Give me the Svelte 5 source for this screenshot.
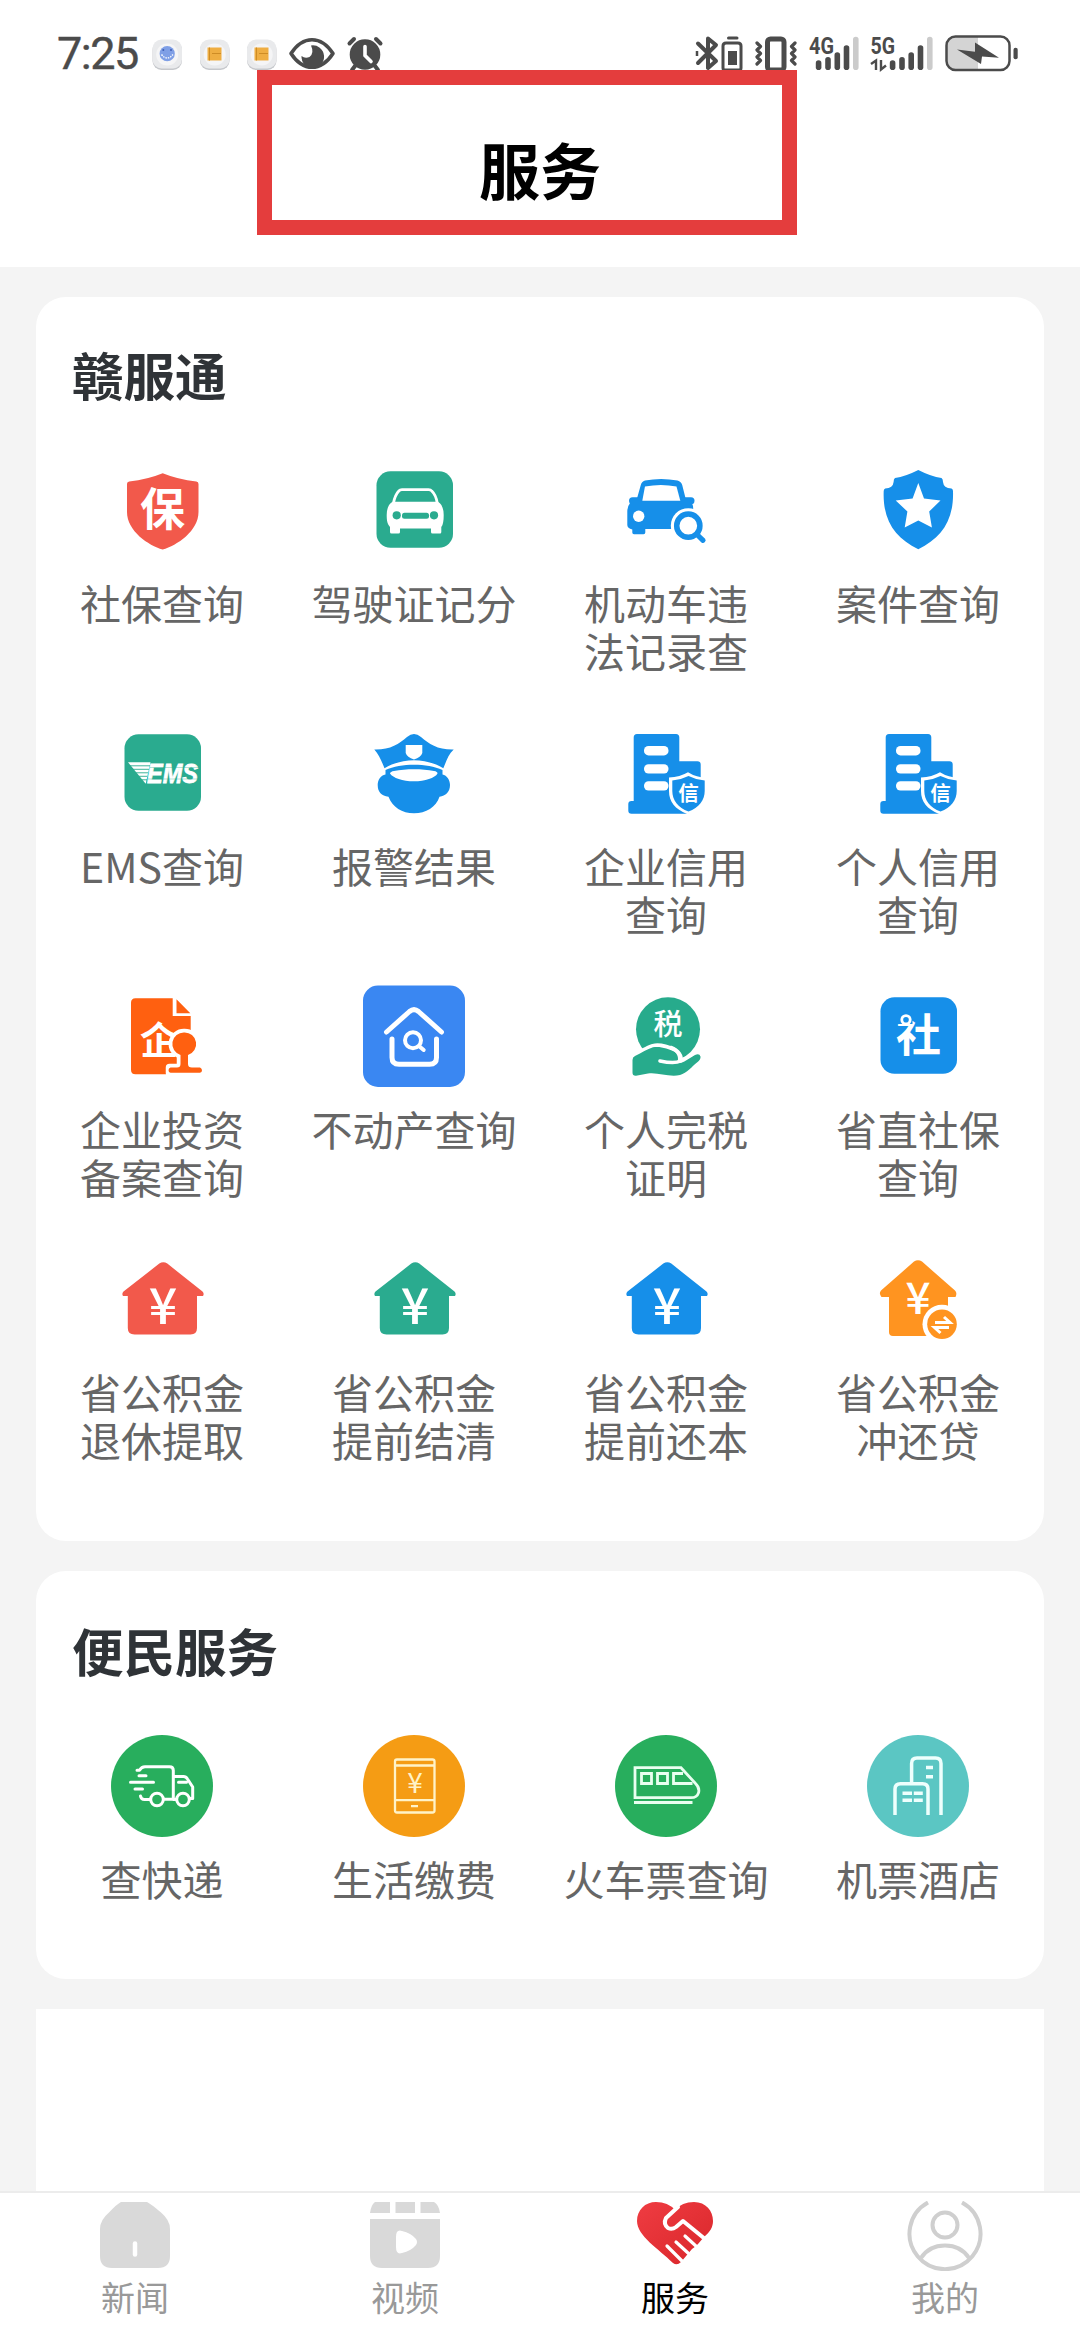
<script>
  const government = [
    { icon: 'insurance', lines: ['社保查询'] },
    { icon: 'license', lines: ['驾驶证记分'] },
    { icon: 'violation', lines: ['机动车违', '法记录查'] },
    { icon: 'case', lines: ['案件查询'] },
    { icon: 'ems', lines: ['EMS查询'] },
    { icon: 'police', lines: ['报警结果'] },
    { icon: 'credit', lines: ['企业信用', '查询'] },
    { icon: 'credit', lines: ['个人信用', '查询'] },
    { icon: 'invest', lines: ['企业投资', '备案查询'] },
    { icon: 'estate', lines: ['不动产查询'] },
    { icon: 'tax', lines: ['个人完税', '证明'] },
    { icon: 'social', lines: ['省直社保', '查询'] },
    { icon: 'fund', color: '#f2594b', lines: ['省公积金', '退休提取'] },
    { icon: 'fund', color: '#2aab8f', lines: ['省公积金', '提前结清'] },
    { icon: 'fund', color: '#168fe9', lines: ['省公积金', '提前还本'] },
    { icon: 'repay', lines: ['省公积金', '冲还贷'] }
  ];

  const daily = [
    { icon: 'express', lines: ['查快递'] },
    { icon: 'payment', lines: ['生活缴费'] },
    { icon: 'train', lines: ['火车票查询'] },
    { icon: 'hotel', lines: ['机票酒店'] }
  ];

  const tabs = [
    { id: 'news', label: '新闻' },
    { id: 'video', label: '视频' },
    { id: 'service', label: '服务', active: true },
    { id: 'mine', label: '我的' }
  ];

  const signal4g = [[818.6, 63], [828, 59.7], [837.3, 55], [846.5, 48]];
  const signal5g = [[892.6, 63], [902, 59.7], [911.2, 55], [920.5, 48]];
</script>

{#snippet serviceIcon(item)}
  <svg class="icon" viewBox="0 0 102 102">
    {#if item.icon === 'insurance'}
      <path fill="#f2594b" d="M51.7 14.3Q67 20.5 85.3 22.6Q87.5 23 87.5 25V53C87.5 72 66 86.500 51.7 90.500C37.500 86.500 16 72 16 53V25Q16 23 18.200 22.600Q36.500 20.500 51.700 14.300Z" />
      <text class="glyph" x="51.5" y="67" font-size="45">保</text>
    {:else if item.icon === 'license'}
      <rect x="13.500" y="12.300" width="76.500" height="76.500" rx="14" fill="#2aab8f" />
      <path fill="none" stroke="#fff" stroke-width="2.800" d="M30.500 44Q32 36 35.800 32Q37 30.600 39 30.600H65.500Q67.700 30.600 68.800 32Q73 36 74.200 44" />
      <path fill="#fff" d="M29.500 42.700H75C79 45 80.700 50 80.700 56C80.700 62 80 66 78.300 68V73Q78.300 74.500 77 74.500H69.500Q68 74.500 68 73V69.500H37V73Q37 74.500 35.500 74.500H28.500Q27 74.500 27 73V68C24.500 65 23.700 62 23.700 56C23.700 50 25.500 45 29.500 42.700Z" />
      <circle cx="33.700" cy="56.300" r="4.100" fill="#2aab8f" />
      <circle cx="71" cy="56.300" r="4.100" fill="#2aab8f" />
      <rect x="39" y="53.800" width="27" height="6" rx="2.500" fill="#2aab8f" />
    {:else if item.icon === 'violation'}
      <g fill="#168fe9">
        <path d="M21 43L25.800 26Q26.500 22.500 30 21.500Q46 18.500 62.500 21.500Q66.300 22.500 67.200 26L71.500 43Z" />
        <rect x="14" y="38.300" width="18" height="7" rx="3.500" />
        <rect x="61" y="38.300" width="18.500" height="7" rx="3.500" />
        <path d="M16 42.500H75Q79 45 78 52V70H30.300V73.500Q30.300 75.300 28.500 75.300H19Q17.300 75.300 17.300 73.500V70.500Q12.300 69 12.300 66V52Q12.500 47 16 42.500Z" />
      </g>
      <path fill="#fff" d="M27.300 41.700L30 27.500Q46 24.500 61.500 27.500L65.300 41.700Z" />
      <circle cx="23.700" cy="57.300" r="5.700" fill="#fff" />
      <circle cx="73.300" cy="66.700" r="17.500" fill="#fff" />
      <circle cx="73.300" cy="66.700" r="11.600" fill="#fff" stroke="#168fe9" stroke-width="5.500" />
      <path d="M82 75.500L88 81.300" stroke="#168fe9" stroke-width="5.200" stroke-linecap="round" />
    {:else if item.icon === 'case'}
      <path fill="#168fe9" d="M51.300 11Q64 17.500 74.500 19Q76 20 76 23Q76.500 29 84.500 29.500Q86 30 86 32C87 62 74 79 51.300 90.300C28.500 79 15.500 62 16.700 32Q16.700 30 18.200 29.500Q26 29 26.600 23Q26.600 20 28 19Q38.500 17.500 51.300 11Z" />
      <path fill="#fff" d="M51.300 24L57 39.600L73.500 41.500L62.200 52.500L64.900 68.600L51.300 61.500L37.700 68.600L40.400 52.500L28.700 41.500L45.600 39.600Z" />
    {:else if item.icon === 'ems'}
      <rect x="13.500" y="12.300" width="76.500" height="76.500" rx="14" fill="#2aab8f" />
      <path fill="#fff" d="M17 40.300H39.500L34.700 61.700Z" />
      <text class="latin" x="36" y="61" font-size="28" textLength="51" lengthAdjust="spacingAndGlyphs">EMS</text>
      <path stroke="#2aab8f" stroke-width="0.900" d="M18 43.800H39M21 47.300H38M25 50.800H37M28 54.300H36M31 57.800H36" />
      <path stroke="#2aab8f" stroke-width="0.500" opacity=".7" d="M39 45.500H88M37 57H88" />
    {:else if item.icon === 'police'}
      <path fill="#168fe9" d="M11.300 27.600C27 28 36 22 44 15Q51 9 58 15C66 22 75 28 90.700 27.600C85 33 83.500 39 80.300 46.300C63 35.500 39 35.500 21.500 46.300C18.500 39 16 33 11.300 27.600Z" />
      <path fill="#168fe9" d="M22.500 48C38 41 64 41 79.500 48V52.500C84 53.500 87 58 87 63C87 70 82.500 74 76.500 74.700C73 85 63 91.300 51 91.300C39 91.300 29.500 85 25.500 74.700C18.500 74 14.700 70 14.700 63C14.700 58 17.500 53.500 22.500 52.500Z" />
      <path fill="#fff" d="M27 51.500Q27.500 49.500 31 49C43 46.800 59 46.800 71 49Q74.500 49.500 74.500 51.500C72 56 62 59.300 51 59.300C39.500 59.300 30 56 27 51.500ZM42.700 23H59.300V31Q58 35 51 37.500Q44 35 42.700 31Z" />
    {:else if item.icon === 'credit'}
      <path fill="#168fe9" d="M22 12H61Q64.300 12 64.300 15.500V39.300H82.500Q85.700 39.300 85.700 42.500V91.700H16.500Q13.300 91.700 13.300 88.500V82Q13.300 79 16.500 79H18.700V15.500Q18.700 12 22 12Z" />
      <g fill="#fff">
        <rect x="29" y="24" width="24.500" height="9.400" rx="4.500" />
        <rect x="29" y="42.200" width="24.500" height="9.400" rx="4.500" />
        <rect x="29" y="59.200" width="24.500" height="9.400" rx="4.500" />
        <path d="M73 50.300Q81 55.500 93 56V92H72C60 87 54 80 54 69V55.500Q65 55 73 50.300Z" />
      </g>
      <path fill="#168fe9" d="M73.500 54Q81.500 58 89.700 58.500V69C89.700 78 84 86 73.500 89.500C63 86 57.300 78 57.300 69V58.500Q65.500 58 73.500 54Z" />
      <text class="glyph" x="73.500" y="79" font-size="20.500">信</text>
    {:else if item.icon === 'invest'}
      <path fill="#ff6010" d="M24.500 13.300H61.700V31H79.700V89.300H24.500Q20 89.300 20 84.800V17.800Q20 13.300 24.500 13.300ZM65.500 14.300L79.300 28.300H65.500Z" />
      <text class="glyph" x="48" y="68.500" font-size="38">企</text>
      <path fill="#fff" stroke="#fff" stroke-width="7.500" stroke-linejoin="round" d="M73.300 47.500A11.500 11.500 0 0 1 77 70V79Q77 82.500 81 82.500H89.500V88H58.500V82.500H66Q69.500 82.500 69.500 79V70A11.500 11.500 0 0 1 73.300 47.500Z" />
      <path fill="#ff6010" d="M73.300 47.500A11.500 11.500 0 0 1 77 70V79Q77 82.500 81 82.500H89Q91 83.500 91 85.200Q91 87.500 89 87.700H59.500Q57.500 87.500 57.500 85.200Q57.500 83 59.500 82.500H66Q69.500 82.500 69.500 79V70A11.500 11.500 0 0 1 73.300 47.500Z" />
    {:else if item.icon === 'estate'}
      <rect x="0" y="0.500" width="102" height="101.500" rx="15" fill="#3a87f2" />
      <g fill="none" stroke="#fff" stroke-width="5" stroke-linecap="round" stroke-linejoin="round">
        <path d="M23.500 47L46.500 26.500Q51 22.700 55.500 26.500L78.500 47" />
        <path d="M29 54V72.500Q29 79.300 36 79.300H66.500Q73.500 79.300 73.500 72.500V54" />
        <circle cx="50" cy="55.300" r="8" stroke-width="4" />
        <path d="M56.500 61.500L60.700 65" stroke-width="4" />
      </g>
    {:else if item.icon === 'tax'}
      <circle cx="53" cy="44.300" r="32" fill="#27ab8c" />
      <text class="glyph medium" x="53" y="49.500" font-size="29">税</text>
      <path fill="#27ab8c" stroke="#fff" stroke-width="7" paint-order="stroke" d="M17.500 75Q17.500 72 20 71C27 68 32 64 38 62.300C45 60.800 54 64 59 66.500C63 69 64 74 62 77.500C65 78.500 68 77.500 71 75.500L80 70Q84.500 68 85.500 71.500Q86 74.500 82 77.500C77 81.500 72 88 65 90C54 92.500 43 87 33 88.500L21 90.800Q17.500 91 17.500 87.500Z" />
      <path fill="none" stroke="#fff" stroke-width="3.600" stroke-linecap="round" d="M45 76C52 77.500 60 79 65.500 76C67.500 71 63 65 56 62.500" />
    {:else if item.icon === 'social'}
      <rect x="13.500" y="12.300" width="76.500" height="76.500" rx="14" fill="#168fe9" />
      <text class="glyph" x="51.500" y="66.500" font-size="45">社</text>
      <rect x="30" y="24" width="15.500" height="15" fill="#168fe9" />
      <circle cx="39" cy="34.800" r="4.200" fill="#168fe9" stroke="#fff" stroke-width="2.800" />
    {:else if item.icon === 'fund'}
      <path fill={item.color} d="M48.300 15.600Q52.300 12.800 56.300 15.600L91.500 43.500Q93.500 45.500 92 48H86V80Q86 86.500 79.500 86.500H23.500Q16.800 86.500 16.800 80V48H12Q10.500 45.500 12.500 43.500Z" />
      <text class="yen" x="52" y="76" font-size="50">¥</text>
    {:else if item.icon === 'repay'}
      <path fill="#ff9420" d="M47 13.600Q51 10.800 55 13.600L88 42.500Q90.500 45 88.500 49H81V88H26Q22 88 22 84V49H14.500Q11.500 45.500 14 42.500Z" />
      <text class="yen" x="51" y="65.500" font-size="44">¥</text>
      <circle cx="75" cy="76.300" r="19.500" fill="#fff" />
      <circle cx="75" cy="76.300" r="14.800" fill="#ff9420" />
      <path fill="none" stroke="#fff" stroke-width="3" d="M68 74.500H83L77 69M82 79.500H67.500L73.500 85" />
    {:else if item.icon === 'express'}
      <circle cx="51" cy="51" r="51" fill="#28ae5d" />
      <g fill="none" stroke="#fff" stroke-width="3" stroke-linecap="round" stroke-linejoin="round">
        <path d="M26 35.300H28.500Q30.500 31.700 34 31.700H58.500Q62.300 31.700 62.300 35.500V64.300H53M62.300 41.500H72.500Q75 41.500 76.500 44L81.700 52V63.500H79.500M67.500 47.300H75.500M29.500 61Q30 64.500 33.500 64.500H39.500M62.300 64.500H65" />
        <path d="M28 40.700H35M19.500 47.200H42.500M24 54H31.500" />
        <circle cx="46" cy="64.500" r="6.300" />
        <circle cx="72" cy="64.500" r="6.300" />
      </g>
    {:else if item.icon === 'payment'}
      <circle cx="51" cy="51" r="51" fill="#f59c14" />
      <g fill="none" stroke="#fff3c8" stroke-width="2.300">
        <rect x="32" y="24.500" width="39.500" height="53" rx="2" />
        <path d="M32 30.500H71.500M32 65.200H71.500M48 71.200H55" />
      </g>
      <text class="yen thin" x="52" y="57.500" font-size="28">¥</text>
    {:else if item.icon === 'train'}
      <circle cx="51" cy="51" r="51" fill="#28ae5d" />
      <g fill="none" stroke="#e9fff0" stroke-width="2.800">
        <path d="M20 32.700H66L80.500 48.500C86.500 54.500 84 62.700 76 62.700H20ZM19 67.500H77.500" />
        <path d="M26.500 38.500H36.500V48.500H26.500ZM42.500 38.500H52.500V48.500H42.500ZM77.500 48.500H58.500V38.500H68" />
      </g>
    {:else}
      <circle cx="51" cy="51" r="51" fill="#5bc6c3" />
      <g fill="none" stroke="#eefffd" stroke-width="3.500">
        <path d="M44.600 48.500V28.500Q44.600 23 50 23H68.500Q74 23 74 28.500V80M28 80V54Q28 48.700 33.500 48.700H55.500Q61 48.700 61 54V80" />
        <path d="M59 32.500H66M59 41.700H66M35.500 58.300H45M46.800 58.300H55.800M35.500 65.200H45M46.800 65.200H55.800" />
      </g>
    {/if}
  </svg>
{/snippet}

{#snippet services(items)}
  <div class="grid">
    {#each items as item}
      <div class="service">
        {@render serviceIcon(item)}
        <div class="label">
          {#each item.lines as line}<span>{line}</span>{/each}
        </div>
      </div>
    {/each}
  </div>
{/snippet}

<div class="app">
  <header>
    <div class="status">
      <span class="time">7:25</span>
      <svg class="left-tray" width="240" height="42" viewBox="150 32 240 42">
        {#each [152.500, 200, 247] as x, i}
          <rect {x} y="41" width="29.500" height="29" rx="9" fill="#c6c8cc" />
          <rect {x} y="39.500" width="29.500" height="29" rx="9" fill="#e9eaec" />
          <circle cx={x + 14.700} cy="54.500" r="11" fill="#f5f5f6" />
          {#if i === 0}
            <circle cx={x + 14.700} cy="53.700" r="7.600" fill="#7f9fe6" />
            <path d="M161.500 54.500Q167.200 61.500 173 54.500" fill="none" stroke="#fff" stroke-width="1.300" stroke-dasharray="1.500 1" />
            <circle cx="163.300" cy="50" r="1" fill="#405fb5" /><circle cx="171" cy="50" r="1" fill="#405fb5" />
          {:else}
            <rect x={x + 7.500} y="47.500" width="14" height="13" fill="#efae42" />
            <path d="M{x + 9.500} 47.500V60.500M{x + 12} 53.500H{x + 21}" stroke="#c98822" stroke-width="0.900" />
          {/if}
        {/each}
        <path d="M291 53.500Q300 39.700 312 39.700T333 53.500Q324 67.300 312 67.300T291 53.500Z" fill="none" stroke="#4b4b4b" stroke-width="3.600" stroke-linejoin="round" />
        <path d="M311 45.500A11.300 11.300 0 1 1 301.500 56Q305 59 309.500 57Q314.500 53 311 45.500Z" fill="#4b4b4b" />
        <circle cx="365" cy="54.500" r="15.300" fill="#4b4b4b" />
        <path d="M349.500 43.500L354 39M380.500 43.500L376 39M355 66L352 70M375 66L378 70" stroke="#4b4b4b" stroke-width="4" stroke-linecap="round" />
        <path d="M365 46.500V55.500L371 61.500" fill="none" stroke="#fff" stroke-width="3.600" stroke-linecap="round" />
      </svg>
      <svg class="right-tray" width="332" height="42" viewBox="690 32 332 42">
        <g fill="none" stroke="#4b4b4b" stroke-linejoin="round" stroke-linecap="round">
          <path stroke-width="4" d="M698 43.500L716 61L708 68V38.500L716 45L698 63" />
          <path stroke-width="3" d="M728.500 38H737M726 43H738Q741 43 741 46V68Q741 70 739 70H725Q723 70 723 68V46Q723 43 726 43Z" />
          <rect x="767.500" y="39" width="16.500" height="31" rx="3" stroke-width="5" />
          <path stroke-width="3.200" d="M757 43L760.500 46.500L757 50L760.500 53.500L757 57L760.500 60.500L757 64M795 43L791.500 46.500L795 50L791.500 53.500L795 57L791.500 60.500L795 64" />
        </g>
        <path stroke="#4b4b4b" stroke-width="2.500" d="M697 51V56" />
        <rect x="728" y="51" width="9" height="14" fill="#4b4b4b" />
        <text class="network" x="809" y="53.500" textLength="25" lengthAdjust="spacingAndGlyphs">4G</text>
        <text class="network" x="870.500" y="53.500" textLength="24.500" lengthAdjust="spacingAndGlyphs">5G</text>
        <g stroke="#4b4b4b" stroke-width="5.600" stroke-linecap="round">
          {#each [...signal4g, ...signal5g] as [x, top]}
            <path d="M{x} {top}V67.300" />
          {/each}
          <path stroke="#cbcbcb" d="M855.800 39.500V67.300M929.800 39.500V67.300" />
        </g>
        <path fill="none" stroke="#4b4b4b" stroke-width="2.400" d="M871 64L876 60.500V70M881 60V69.500L886 65.500" />
        <path fill="#d4d4d4" d="M955 36.500H978V70H955Q946.500 70 946.500 61V45.500Q946.500 36.500 955 36.500Z" />
        <rect x="946.500" y="36.500" width="63" height="33.500" rx="9" fill="none" stroke="#4b4b4b" stroke-width="2.500" />
        <rect x="1013.500" y="47.700" width="4.200" height="11.500" rx="2" fill="#4b4b4b" />
        <path fill="#4b4b4b" d="M957 49.500L975 51.700V42.500L999 57.700L982 56.500L981 64Z" />
      </svg>
    </div>
    <h1>服务</h1>
    <div class="marker"></div>
  </header>

  <main>
    <section class="card primary">
      <h2>赣服通</h2>
      {@render services(government)}
    </section>
    <section class="card daily">
      <h2>便民服务</h2>
      {@render services(daily)}
    </section>
    <section class="blank"></section>
  </main>

  <nav>
    {#each tabs as tab}
      <div class="tab" class:active={tab.active}>
        <svg width="76" height="70" viewBox="0 0 76 70">
          {#if tab.id === 'news'}
            <path fill="#d9d9d9" d="M24 1H50Q54 3 64 11.500Q73 19 73 28V55Q73 67 61 67H15Q3 67 3 55V28Q3 19 12 11.500Q20 3 24 1Z" />
            <path stroke="#fff" stroke-width="4.500" stroke-linecap="round" d="M38 42.500V53.500" />
          {:else if tab.id === 'video'}
            <path fill="#d9d9d9" d="M8 1H23V12H3Q4 4 8 1ZM28.500 1H48V12H28.500ZM53.500 1H67Q72 4 73 12H53.500ZM3 18H73V55Q73 67 61 67H15Q3 67 3 55Z" />
            <path fill="#fff" d="M29 36Q29 28 35 30Q44 32 49 38Q51 41 49 44Q44 50 35 52Q29 54 29 46Z" />
          {:else if tab.id === 'service'}
            <defs>
              <linearGradient id="heart" x1="0" y1="0" x2="1" y2="1">
                <stop offset="0" stop-color="#ef3c42" />
                <stop offset="1" stop-color="#d9262a" />
              </linearGradient>
            </defs>
            <path fill="url(#heart)" d="M19 1Q31 1 38 9Q45 1 57 1C69 1 76 10 76 20C76 26 73 31 67 36L61 43Q58 46 55 48L44 61Q40 65 36 62C22 48 0 35 0 20C0 9 8 1 19 1Z" />
            <g fill="none" stroke="#fff" stroke-width="4" stroke-linecap="round" stroke-linejoin="round">
              <path d="M41 6L29 17Q26 23 31 27Q35 29 39 26L46 20L68 38" />
              <path d="M48 35L60 46M39 41L51 52M30 45L45 60" stroke-width="3.200" />
            </g>
          {:else}
            <g fill="none" stroke="#cfcfcf" stroke-width="4">
              <path d="M21 1.500A35.500 35.500 0 1 0 55 1.500" />
              <circle cx="38" cy="24" r="12.500" />
              <path d="M14 57Q22 44.500 38 44.500T62 57" />
            </g>
          {/if}
        </svg>
        <span>{tab.label}</span>
      </div>
    {/each}
  </nav>
</div>

<style>
  :global(body) { margin: 0; }

  .app {
    width: 1080px;
    height: 2340px;
    display: flex;
    flex-direction: column;
    overflow: hidden;
    background: #f4f4f4;
    font-family: "Noto Sans CJK SC", sans-serif;
  }

  header {
    position: relative;
    flex: none;
    height: 267px;
    background: #fff;
  }

  .status {
    display: flex;
    align-items: center;
    box-sizing: border-box;
    height: 106px;
    padding-left: 57px;
    padding-right: 58px;
  }

  .status svg { flex: none; }

  .time {
    width: 93px;
    padding-top: 2px;
    font: 400 45px/42px Roboto, sans-serif;
    letter-spacing: -1.500px;
    color: #4b4b4b;
    -webkit-text-stroke: 0.4px #4b4b4b;
  }

  .right-tray { margin-left: auto; }

  .network {
    font: 700 24px Roboto, sans-serif;
    fill: #4b4b4b;
  }

  h1 {
    margin: 18px 0 0;
    font-size: 61px;
    line-height: 90px;
    font-weight: 700;
    text-align: center;
    color: #000;
  }

  .marker {
    position: absolute;
    left: 257px;
    top: 70px;
    box-sizing: border-box;
    width: 540px;
    height: 165px;
    border: 15px solid #e43d3d;
  }

  main {
    flex: 1;
    min-height: 0;
    display: flex;
    flex-direction: column;
    gap: 30px;
    padding: 30px 36px 0;
  }

  .card {
    flex: none;
    box-sizing: border-box;
    border-radius: 30px;
    background: #fff;
    padding-top: 42px;
  }

  .primary { height: 1244px; }
  .daily { height: 408px; padding-top: 44px; }

  .blank {
    flex: 1;
    background: #fff;
  }

  h2 {
    margin: 0 0 50px 36px;
    font-size: 51.500px;
    line-height: 70px;
    font-weight: 700;
    color: #2f3337;
  }

  .grid {
    display: grid;
    grid-template-columns: repeat(4, 252px);
    grid-auto-rows: 218px;
    row-gap: 45px;
  }

  .service {
    display: flex;
    flex-direction: column;
    align-items: center;
    gap: 17px;
  }

  .icon {
    flex: none;
    width: 102px;
    height: 102px;
  }

  .label {
    display: flex;
    flex-direction: column;
    align-items: center;
    font-size: 41px;
    line-height: 48px;
    color: #666;
    white-space: nowrap;
  }

  .glyph {
    fill: #fff;
    font-family: "Noto Sans CJK SC", sans-serif;
    font-weight: 700;
    text-anchor: middle;
  }

  .medium { font-weight: 500; }

  .latin {
    fill: #fff;
    stroke: #fff;
    stroke-width: 0.8px;
    font-family: "Liberation Sans", sans-serif;
    font-weight: 700;
    font-style: italic;
  }

  .yen {
    fill: #fff;
    font-family: "Noto Sans CJK SC", sans-serif;
    font-weight: 500;
    text-anchor: middle;
  }

  .thin { font-weight: 400; fill: #fff3c8; }

  nav {
    flex: none;
    display: grid;
    grid-template-columns: repeat(4, 1fr);
    box-sizing: border-box;
    height: 149px;
    padding-top: 8px;
    border-top: 2px solid #ececec;
    background: #fff;
  }

  .tab {
    display: flex;
    flex-direction: column;
    align-items: center;
    gap: 5px;
    font-size: 34px;
    line-height: 42px;
    color: #999;
  }

  .active { color: #000; }
</style>
